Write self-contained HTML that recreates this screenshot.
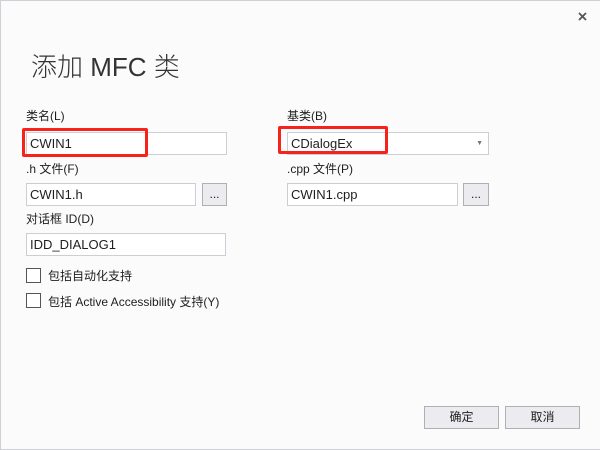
<!DOCTYPE html>
<html><head><meta charset="utf-8"><style>
*{box-sizing:border-box;margin:0;padding:0}
body{width:600px;height:450px;background:#fbfbfb;position:relative;overflow:hidden;font-family:"Liberation Sans","Noto Sans CJK SC",sans-serif;color:#1e1e1e;font-size:12px}
.frame{position:absolute;left:0;top:0;width:600px;height:450px;border:1px solid #cfcfd8;border-right:none}
.a{position:absolute}
.lbl{font-size:12px;line-height:14px}
.in{background:#fff;border:1px solid #ccced6;height:23px;font-size:13px;line-height:21px;padding-left:3px}
.btn{background:#ececf0;border:1px solid #b0b0b0;text-align:center;line-height:20px}
.red{border:3px solid #f5231c;border-radius:2px}
.cb{width:15px;height:15px;border:1px solid #555;background:#fff}
</style></head><body>
<div class="frame"></div>
<svg class="a" style="left:578px;top:12px" width="9" height="9" viewBox="0 0 9 9"><path d="M1 1L8 8M8 1L1 8" stroke="#555" stroke-width="1.8"/></svg>
<div class="a" style="left:31px;top:50px;font-size:26px;line-height:34px;color:#333;font-weight:300">添加 MFC 类</div>

<div class="a lbl" style="left:26px;top:109px">类名(L)</div>
<div class="a in" style="left:26px;top:132px;width:201px">CWIN1</div>
<div class="a red" style="left:22px;top:128px;width:126px;height:29px"></div>

<div class="a lbl" style="left:287px;top:109px">基类(B)</div>
<div class="a in" style="left:287px;top:132px;width:202px">CDialogEx<span style="position:absolute;right:5px;top:0;font-size:7px;color:#777">▼</span></div>
<div class="a red" style="left:278px;top:126px;width:110px;height:28px"></div>

<div class="a lbl" style="left:26px;top:162px">.h 文件(F)</div>
<div class="a in" style="left:26px;top:183px;width:170px">CWIN1.h</div>
<div class="a btn" style="left:202px;top:183px;width:25px;height:23px">...</div>

<div class="a lbl" style="left:287px;top:162px">.cpp 文件(P)</div>
<div class="a in" style="left:287px;top:183px;width:171px">CWIN1.cpp</div>
<div class="a btn" style="left:463px;top:183px;width:26px;height:23px">...</div>

<div class="a lbl" style="left:26px;top:212px">对话框 ID(D)</div>
<div class="a in" style="left:26px;top:233px;width:200px">IDD_DIALOG1</div>

<div class="a cb" style="left:26px;top:268px"></div>
<div class="a lbl" style="left:48px;top:269px">包括自动化支持</div>
<div class="a cb" style="left:26px;top:293px"></div>
<div class="a lbl" style="left:48px;top:295px">包括 Active Accessibility 支持(Y)</div>

<div class="a btn" style="left:424px;top:406px;width:75px;height:23px">确定</div>
<div class="a btn" style="left:505px;top:406px;width:75px;height:23px">取消</div>
</body></html>
